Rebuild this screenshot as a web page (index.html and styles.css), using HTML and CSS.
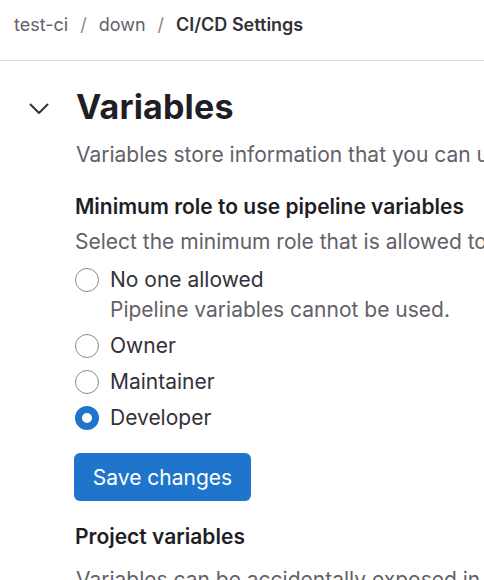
FILE: index.html
```html
<!DOCTYPE html>
<html>
<head>
<meta charset="utf-8">
<link rel="stylesheet" href="styles.css">
</head>
<body>
<nav class="crumbs">
  <a class="crumb">test-ci</a>
  <span class="sep">/</span>
  <a class="crumb">down</a>
  <span class="sep">/</span>
  <span class="crumb current">CI/CD Settings</span>
</nav>
<main class="page">
  <section class="settings">
    <div class="settings-head">
      <button class="toggle" aria-label="Collapse">
        <svg width="24" height="24" viewBox="0 0 24 24"><path d="M3.5 8.5 L12 17 L20.5 8.5" fill="none" stroke="#333238" stroke-width="2" stroke-linecap="round" stroke-linejoin="round"/></svg>
      </button>
      <h2 class="title">Variables</h2>
    </div>
    <div class="settings-body">
      <p class="desc">Variables store information that you can use in job scripts.</p>
      <h3 class="subhead">Minimum role to use pipeline variables</h3>
      <p class="help">Select the minimum role that is allowed to run a new pipeline with pipeline variables.</p>
      <div class="radios">
        <label class="radio">
          <span class="dot"></span>
          <span class="radio-text">
            <span class="radio-label">No one allowed</span>
            <span class="radio-help">Pipeline variables cannot be used.</span>
          </span>
        </label>
        <label class="radio">
          <span class="dot"></span>
          <span class="radio-text"><span class="radio-label">Owner</span></span>
        </label>
        <label class="radio">
          <span class="dot"></span>
          <span class="radio-text"><span class="radio-label">Maintainer</span></span>
        </label>
        <label class="radio">
          <span class="dot checked"></span>
          <span class="radio-text"><span class="radio-label">Developer</span></span>
        </label>
      </div>
      <button class="btn-primary">Save changes</button>
      <h3 class="subhead project">Project variables</h3>
      <p class="desc last">Variables can be accidentally exposed in a job log, or maliciously sent to a third party server.</p>
    </div>
  </section>
</main>
</body>
</html>
```

FILE: styles.css
```css
* { box-sizing: border-box; }
html, body { margin: 0; padding: 0; background: #fff; overflow: hidden; }
body {
  font-family: Inter, "Noto Sans", sans-serif;
  font-size: 21px;
  color: #333238;
  width: 484px;
  height: 580px;
  overflow: hidden;
}
.crumbs {
  display: flex;
  align-items: center;
  gap: 12px;
  height: 61px;
  padding: 0 0 11px 14px;
  border-bottom: 1px solid #dcdcde;
  white-space: nowrap;
  font-size: 18px;
  line-height: 24px;
}
.crumb { color: #626168; text-decoration: none; }
.crumb.current { color: #333238; font-weight: 600; }
.sep { color: #89888d; }
.settings-head {
  display: flex;
  align-items: center;
  margin-top: 26px;
  height: 40px;
}
.toggle {
  border: 0;
  background: none;
  padding: 0;
  margin: 2px 25px 0 27px;
  width: 24px;
  height: 24px;
  display: flex;
}
.title {
  margin: 0;
  font-size: 34px;
  font-weight: 700;
  color: #1f1e24;
  line-height: 40px;
  letter-spacing: 0.005em;
}
.settings-body {
  padding-left: 75px;
  white-space: nowrap;
}
.desc {
  margin: 13px 0 0 1px;
  color: #626168;
  line-height: 30px;
}
.subhead {
  margin: 22px 0 0;
  font-size: 21px;
  font-weight: 600;
  color: #1f1e24;
  line-height: 30px;
}
.help {
  margin: 5px 0 0;
  color: #626168;
  line-height: 30px;
}
.radios {
  display: flex;
  flex-direction: column;
  gap: 6px;
  margin-top: 8px;
}
.radio {
  display: flex;
  align-items: flex-start;
  gap: 11px;
}
.dot {
  width: 24px;
  height: 24px;
  border-radius: 50%;
  border: 1.5px solid #89888d;
  flex: none;
  margin-top: 3px;
  background: #fff;
}
.dot.checked {
  border: 7.5px solid #1f75cb;
  background: #fff;
}
.radio-text { display: flex; flex-direction: column; }
.radio-label { color: #333238; line-height: 30px; }
.radio-help { color: #626168; line-height: 30px; }
.btn-primary {
  display: block;
  margin: 20px 0 0 -1px;
  background: #1f75cb;
  color: #fff;
  border: 0;
  border-radius: 6px;
  height: 48px;
  width: 177px;
  font-family: inherit;
  font-size: 21px;
  padding: 0;
}
.subhead.project { margin-top: 21px; }
.desc.last { margin-top: 13px; }
```
